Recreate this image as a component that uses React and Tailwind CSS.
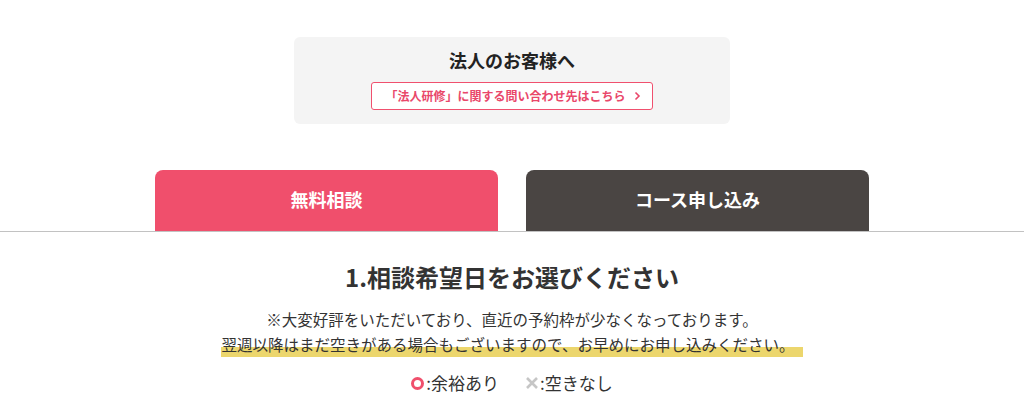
function Tab({ label, color }) {
  return (
    <div
      className={`w-[343px] h-[61px] rounded-t-lg flex items-center justify-center text-white text-[18px] font-bold pb-[3px] ${color}`}
    >
      {label}
    </div>
  );
}

export default function App() {
  return (
    <div
      className="w-[1024px] h-[409px] bg-white overflow-hidden text-[#333]"
      style={{ fontFamily: '"Noto Sans CJK JP", "Noto Sans", sans-serif' }}
    >
      <div className="pt-[37px]">
        <div className="mx-auto w-[436px] h-[87px] rounded-md bg-[#f4f4f4] flex flex-col items-center pt-[10px]">
          <h3 className="text-[18px] leading-[26px] font-bold text-[#222]">法人のお客様へ</h3>
          <a
            href="#"
            className="mt-[9px] w-[282px] h-[28px] bg-white border border-[#f0506e] rounded-[3px] flex items-center justify-center gap-[8px] pl-[2px] text-[#e9476a] text-[12px] font-bold"
          >
            <span>「法人研修」に関する問い合わせ先はこちら</span>
            <svg width="7" height="10" viewBox="0 0 7 10" fill="none" stroke="#e9476a" strokeWidth="1.6">
              <path d="M1.5 1.5 L5 5 L1.5 8.5" />
            </svg>
          </a>
        </div>
      </div>

      <div className="mt-[46px] flex justify-center gap-[28px] border-b border-[#c2c2c2]">
        <Tab label="無料相談" color="bg-[#f04f6c]" />
        <Tab label="コース申し込み" color="bg-[#4a4543]" />
      </div>

      <div className="flex flex-col items-center">
        <h2 className="mt-[27px] text-[24px] leading-[36px] font-bold text-[#333]">1.相談希望日をお選びください</h2>
        <p className="mt-[12px] text-[15.5px] leading-[25px] text-center text-[#333]">
          ※大変好評をいただいており、直近の予約枠が少なくなっております。
          <br />
          <span className="pl-[1px] pr-[9px] pb-[2px] bg-[linear-gradient(transparent_58%,#ecd66d_58%)]">
            翌週以降はまだ空きがある場合もございますので、お早めにお申し込みください。
          </span>
        </p>
        <div className="mt-[13px] flex items-center gap-[26px] text-[17px] leading-[26px] text-[#333]">
          <div className="flex items-center">
            <span className="w-[13px] h-[13px] rounded-full border-[3px] border-[#f04f6c] mr-[2px]" />
            <span>:余裕あり</span>
          </div>
          <div className="flex items-center">
            <svg width="14" height="14" viewBox="0 0 14 14" stroke="#c6c6c6" strokeWidth="2.6" className="mr-[1px]">
              <path d="M2 2 L12 12 M12 2 L2 12" />
            </svg>
            <span>:空きなし</span>
          </div>
        </div>
      </div>
    </div>
  );
}
